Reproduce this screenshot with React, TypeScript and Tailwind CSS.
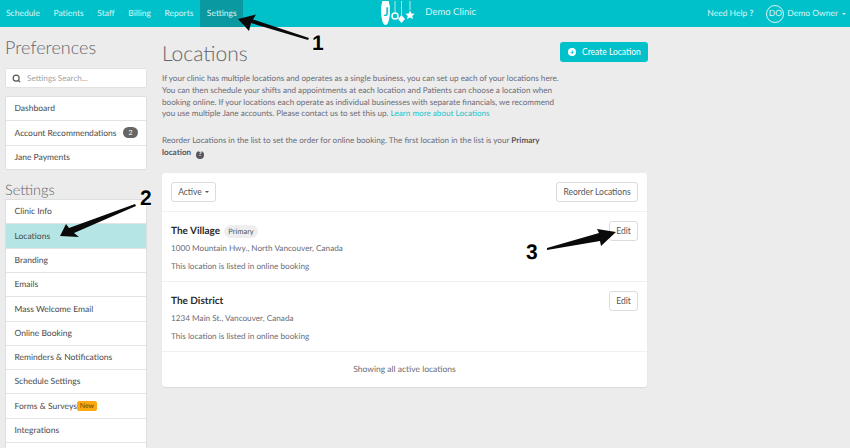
import { Search } from "lucide-react";

const topLinks = ["Schedule", "Patients", "Staff", "Billing", "Reports"];
const settingsLinks = [
  "Clinic Info",
  "Locations",
  "Branding",
  "Emails",
  "Mass Welcome Email",
  "Online Booking",
  "Reminders & Notifications",
  "Schedule Settings",
  "Forms & Surveys",
  "Integrations",
  "",
];

const JaneLogo = () => (
  <svg width="36" height="25" viewBox="0 0 36 25" className="block">
    <ellipse cx="4.5" cy="10" rx="4.5" ry="14" fill="#fff" />
    <text x="2.5" y="15" fontSize="12" fontFamily="Lato" fontWeight="700" fill="#00c1ca">J</text>
    <g stroke="#fff" strokeWidth="0.7" fill="none">
      <line x1="14" y1="0" x2="14" y2="11" />
      <line x1="20.5" y1="0" x2="20.5" y2="15" />
      <line x1="29" y1="0" x2="29" y2="9" />
    </g>
    <circle cx="14" cy="15" r="3" fill="none" stroke="#fff" strokeWidth="1.5" />
    <path d="M20.5 14l3.5 4-3.5 4-3.5-4z" fill="#fff" />
    <path d="M29 9.5l1.4 3 3.3.3-2.5 2.1.8 3.2-3-1.7-3 1.7.8-3.2-2.5-2.1 3.3-.3z" fill="#fff" />
  </svg>
);

const Arrow = ({ d }: { d: string }) => (
  <svg className="absolute left-0 top-0 pointer-events-none" width="850" height="448" viewBox="0 0 850 448">
    <path d={d} fill="#0a0a0a" />
  </svg>
);

const Callout = ({ n, className }: { n: string; className: string }) => (
  <span className={`absolute text-[21px] leading-none font-bold text-black [font-family:'Liberation_Sans',sans-serif] [text-shadow:0_0_2px_#fff,0_0_2px_#fff] ${className}`}>
    {n}
  </span>
);

const Btn = ({ children, className = "" }: { children: React.ReactNode; className?: string }) => (
  <button className={`h-5 rounded-[3px] border border-[#dcdcdc] bg-white text-[8.5px] text-[#555] flex items-center justify-center ${className}`}>
    {children}
  </button>
);

const LocationRow = ({ name, address, primary }: { name: string; address: string; primary?: boolean }) => (
  <div className="h-[70px] border-b border-[#f0f0f0] px-[9px] flex justify-between">
    <div className="pt-[13px] text-[8.2px]">
      <div className="h-[14px] flex items-center">
        <span className="text-[10px] font-bold text-[#2b2b2b]">{name}</span>
        {primary && (
          <span className="ml-[4px] h-[13px] w-[34px] rounded-full bg-[#eeeeee] text-[7.5px] text-[#555] flex items-center justify-center">
            Primary
          </span>
        )}
      </div>
      <p className="mt-[3px] leading-[12px] text-[#6b6b76]">{address}</p>
      <p className="mt-[6px] leading-[12px] text-[#6b6b76]">This location is listed in online booking</p>
    </div>
    <Btn className="w-[29px] mt-[9px]">Edit</Btn>
  </div>
);

export default function App() {
  return (
    <div className="relative h-[448px] w-[850px] overflow-hidden bg-[#ececec] text-[8.5px] [text-rendering:geometricPrecision] [font-family:Lato,sans-serif]">
      <header className="h-[27px] bg-[#00c1ca] text-[#d8f6f7] text-[8.5px] flex items-center relative">
        <nav className="flex h-full">
          {topLinks.map((l) => (
            <a key={l} className="h-full px-[6.8px] first:pl-[6px] flex items-center">{l}</a>
          ))}
          <a className="h-full w-[43px] flex items-center justify-center bg-[#0a99a0]">Settings</a>
        </nav>
        <div className="ml-[138px] flex items-center h-full">
          <JaneLogo />
          <span className="ml-[8px] text-[9.5px]">Demo Clinic</span>
        </div>
        <div className="ml-auto flex items-center pr-[4px]">
          <span>Need Help <b>?</b></span>
          <span className="ml-[13px] h-[18px] w-[18px] rounded-full border border-[#d8f6f7] flex items-center justify-center text-[8.5px]">DO</span>
          <span className="ml-[3px]">Demo Owner</span>
          <span className="ml-[4px] h-0 w-0 border-x-[2.5px] border-t-[2.5px] border-x-transparent border-t-[#d8f6f7]" />
        </div>
      </header>

      <div className="flex">
        <aside className="ml-[5px] w-[142px] shrink-0">
          <h2 className="mt-[10px] h-[20px] text-[18px] leading-[20px] font-light text-[#63636b]">Preferences</h2>
          <div className="mt-[11px] h-[20px] rounded-[2px] border border-[#e2e2e2] bg-white flex items-center pl-[6px] text-[#a5a5a5]">
            <Search size={9} strokeWidth={3} className="text-[#555]" />
            <span className="ml-[6px] text-[8.2px]">Settings Search...</span>
          </div>
          <ul className="mt-[8px] rounded-[2px] border border-[#dfdfdf] bg-white text-[#4a4a4a]">
            <li className="h-[24.3px] pl-[8.5px] flex items-center border-b border-[#e4e4e4]">Dashboard</li>
            <li className="h-[24.3px] pl-[8.5px] pr-[8px] flex items-center justify-between border-b border-[#e4e4e4]">
              Account Recommendations
              <span className="h-[11px] w-[15px] rounded-full bg-[#666] text-[7px] text-white flex items-center justify-center">2</span>
            </li>
            <li className="h-[23px] pl-[8.5px] flex items-center">Jane Payments</li>
          </ul>
          <h2 className="mt-[12px] h-[17.5px] text-[14.5px] leading-[17px] font-light text-[#63636b]">Settings</h2>
          <ul className="border border-[#dfdfdf] bg-white text-[#4a4a4a]">
            {settingsLinks.map((l) => (
              <li
                key={l + "-row"}
                className={`h-[24.3px] pl-[8.5px] flex items-center border-b border-[#e4e4e4] ${l === "Locations" ? "bg-[#b5e6e5]" : ""}`}
              >
                {l}
                {l === "Forms & Surveys" && (
                  <span className="h-[10px] w-[20px] rounded-[2px] bg-[#fdaa10] text-[7px] text-[#6b4a00] flex items-center justify-center">New</span>
                )}
              </li>
            ))}
          </ul>
        </aside>

        <main className="ml-[15px] w-[486px] shrink-0">
          <div className="flex justify-between h-[35px] pt-[15px]">
            <h1 className="text-[21px] leading-[23px] font-light text-[#63636b]">Locations</h1>
            <button className="h-[20px] w-[88px] rounded-[3px] bg-[#00c1ca] text-white text-[8.5px] flex items-center pl-[8px]">
              <span className="h-[8px] w-[8px] rounded-full bg-white text-[#00c1ca] text-[8px] leading-[8px] font-bold flex items-center justify-center">+</span>
              <span className="ml-[6px]">Create Location</span>
            </button>
          </div>
          <div className="mt-[11px] w-[402px] text-[8.15px] leading-[11.8px] text-[#6b6b76]">
            <p>
              If your clinic has multiple locations and operates as a single business, you can set up each of your locations here.
              You can then schedule your shifts and appointments at each location and Patients can choose a location when
              booking online. If your locations each operate as individual businesses with separate financials, we recommend
              you use multiple Jane accounts. Please contact us to set this up. <a className="text-[#1cc5cc]">Learn more about Locations</a>
            </p>
            <p className="mt-[15px]">
              Reorder Locations in the list to set the order for online booking. The first location in the list is your{" "}
              <b className="text-[#55555e]">Primary location</b>
              <span className="ml-[5px] inline-flex h-[8px] w-[8px] rounded-full bg-[#55555e] text-white text-[7px] font-bold items-center justify-center align-[-1px]">?</span>
            </p>
          </div>
          <section className="mt-[14px] w-[485px] rounded-[3px] bg-white shadow-[0_1px_1px_rgba(0,0,0,0.08)]">
            <div className="h-[39px] border-b border-[#f0f0f0] px-[9px] flex items-center justify-between">
              <Btn className="w-[45px] gap-[3px]">
                Active
                <span className="h-0 w-0 border-x-[2.5px] border-t-[2.5px] border-x-transparent border-t-[#555]" />
              </Btn>
              <Btn className="w-[82px]">Reorder Locations</Btn>
            </div>
            <LocationRow name="The Village" address="1000 Mountain Hwy., North Vancouver, Canada" primary />
            <LocationRow name="The District" address="1234 Main St., Vancouver, Canada" />
            <div className="h-[35px] flex items-center justify-center text-[#6b6b76]">Showing all active locations</div>
          </section>
        </main>
      </div>

      {/* annotations */}
      <Arrow d="M238 19L256 14.5L253 19.5L309 38L308 40L251 23L249 31Z" />
      <Callout n="1" className="left-[312px] top-[33px]" />
      <Arrow d="M60 236L66 224L69 228L135 204L136 206L74 233L79 237Z" />
      <Callout n="2" className="left-[140px] top-[188px]" />
      <Arrow d="M616 232L597 229L599 233L547 248L547 250L600 241L601 246Z" />
      <Callout n="3" className="left-[526px] top-[242px]" />
    </div>
  );
}
